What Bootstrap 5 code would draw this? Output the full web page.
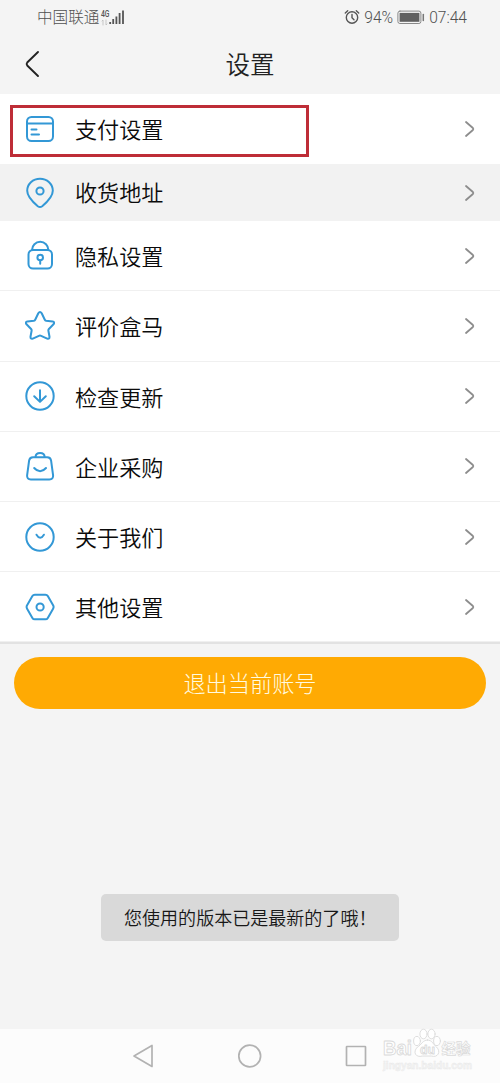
<!DOCTYPE html>
<html lang="zh-CN">
<head>
<meta charset="utf-8">
<meta name="viewport" content="width=device-width, initial-scale=1">
<title>设置</title>
<link href="https://cdn.jsdelivr.net/npm/bootstrap@5.3.0/dist/css/bootstrap.min.css" rel="stylesheet">
<style>
  body { background: #f4f4f4; color: #111; font-family: Roboto, "Noto Sans CJK SC", sans-serif; font-weight: 350; overflow: hidden; }
  svg { display: block; flex: none; fill: none; stroke-linecap: round; stroke-linejoin: round; }
  .screen { height: 1083px; }
  .status { height: 34px; padding: 1px 33px 0 37px; color: #505050; font-size: 15.6px; font-weight: 300; line-height: 33px; }
  .status span { padding-top: 1px; }
  .title-bar { height: 60px; padding: 0 24px; }
  .title-bar h1 { font-size: 24.5px; font-weight: 350; line-height: 36px; color: #222; padding: 4px 16px 0 0; }
  .settings { --bs-list-group-border-radius: 0; border-bottom: 2px solid #e2e2e2; }
  .settings .list-group-item { height: 70.2px; padding: 0 24px 0 25px; border: 0; border-bottom: 1px solid #f0f0f0; background: #fff; color: #0b0b0b; font-size: 22.1px; line-height: 32px; }
  .settings .list-group-item.pressed { height: 57px; background: #f2f2f2; border: 0; }
  .settings .list-group-item:first-child, .settings .list-group-item:last-child { border-bottom-color: transparent; }
  .settings span { padding-top: 3px; }
  .settings .pressed span { padding-top: 1px; }
  .icon { stroke: #3398d6; stroke-width: 2; margin-right: 20px; }
  .arrow { stroke: #8d8d8d; stroke-width: 1.8; }
  .highlight-box { left: 10px; top: 11px; width: 299px; height: 52px; border: 3px solid #be2d37; }
  .logout { height: 52px; margin: 13px 14px 0; padding: 2px 0 0; background: #ffaa03; border: 0; color: #fffbe0; font-size: 22.2px; font-weight: 300; }
  .logout:hover { background: #ffaa03; color: #fffbe0; }
  .notice { width: 298px; height: 47px; margin-top: 185px; padding: 2px 0 0 23px; border-radius: 5px; background: #d9d9d9; color: #171717; font-size: 18.05px; white-space: nowrap; }
  .system-nav { height: 54px; background: #fcfcfc; padding: 0 132px; }
  .system-nav svg { stroke: #b2b2b2; stroke-width: 1.7; }
  .watermark { right: 24px; bottom: 9px; }
  .watermark text { font-family: "Liberation Sans", "Noto Sans CJK SC", sans-serif; font-weight: 700; }
</style>
</head>
<body>
<div class="screen d-flex flex-column position-relative">
  <div class="status d-flex align-items-center justify-content-between">
    <div class="d-flex align-items-center">
      <span>中国联通</span>
      <svg width="27" height="18" viewBox="0 0 27 18">
        <text x="2" y="8" font-size="8.5" font-family="Roboto, sans-serif" font-weight="500" fill="#555" textLength="8.500" lengthAdjust="spacingAndGlyphs">4G</text>
        <path d="M4 16v-5l-1 1M7 11v5l1-1" stroke="#bbb" stroke-width=".8"/>
        <path d="M11.2 15v-2M14.2 15v-5M17.4 15V7.500M20.600 15V4M24 15V1.500" stroke="#555" stroke-width="1.8" stroke-linecap="butt"/>
      </svg>
    </div>
    <div class="d-flex align-items-center">
      <svg width="16" height="18" viewBox="0 0 16 18" stroke="#555" stroke-width="1.4"><circle cx="8" cy="8.500" r="5.700"/><path d="M8 5.500v3.200l2 2M1.300 4l2.400-2.200M14.700 4l-2.400-2.200"/></svg>
      <span class="ms-1">94%</span>
      <svg class="ms-1" width="28" height="18" viewBox="0 0 28 18"><rect x=".9" y="2.100" width="23" height="12.400" rx="2" stroke="#888"/><rect x="2.600" y="3.900" width="19.800" height="8.900" fill="#606060"/><path d="M26.300 5.500v6" stroke="#777" stroke-width="1.5"/></svg>
      <span class="ms-1">07:44</span>
    </div>
  </div>

  <header class="title-bar d-flex align-items-center">
    <svg width="16" height="28" viewBox="0 0 16 28" stroke="#222" stroke-width="1.900"><path d="M14 2 3.200 12.500q-1.200 1.500 0 3L14 26"/></svg>
    <h1 class="flex-fill text-center mb-0">设置</h1>
  </header>

  <div class="list-group list-group-flush settings position-relative">
    <a class="list-group-item d-flex align-items-center">
      <svg class="icon" width="30" height="32" viewBox="0 0 30 32"><rect x="2" y="4" width="26" height="24" rx="4.500"/><path d="M2 10.500h26M6.500 16.500h5M6.500 21.500h7.500"/></svg>
      <span class="flex-fill">支付设置</span>
      <svg class="arrow" width="12" height="18" viewBox="0 0 12 18"><path d="m2 2 6.900 6q.8 1 0 2L2 16"/></svg>
    </a>
    <a class="list-group-item pressed d-flex align-items-center">
      <svg class="icon" width="30" height="32" viewBox="0 0 30 32"><path d="M15 1.700C7.800 1.700 2.200 7 2.200 13.800c0 5.800 4.300 10.200 10.600 15.400q2.200 1.600 4.400 0C23.500 24 27.800 19.600 27.800 13.800 27.800 7 22.200 1.700 15 1.700Z"/><circle cx="15" cy="14" r="3.600"/></svg>
      <span class="flex-fill">收货地址</span>
      <svg class="arrow" width="12" height="18" viewBox="0 0 12 18"><path d="m2 2 6.900 6q.8 1 0 2L2 16"/></svg>
    </a>
    <a class="list-group-item d-flex align-items-center">
      <svg class="icon" width="30" height="32" viewBox="0 0 30 32"><rect x="3.500" y="10" width="23.500" height="18.500" rx="4.500"/><path d="M7 10a8.200 8.200 0 0 1 16.400 0M15.200 20.500v3.200"/><circle cx="15.200" cy="17.500" r="2.800"/></svg>
      <span class="flex-fill">隐私设置</span>
      <svg class="arrow" width="12" height="18" viewBox="0 0 12 18"><path d="m2 2 6.900 6q.8 1 0 2L2 16"/></svg>
    </a>
    <a class="list-group-item d-flex align-items-center">
      <svg class="icon" width="30" height="32" viewBox="0 0 30 32"><path d="M13.300 3.200q1.700-2.600 3.400 0l3.100 6.500q.4.800 1.300 1l6.500.7q2.600.7.900 2.900l-4.600 4.700q-.7.800-.5 1.800l1.100 5.900q.1 2.700-2.300 1.900l-6.100-2.800q-1.100-.5-2.200 0l-6.100 2.800q-2.400.8-2.300-1.900l1.100-5.900q.2-1-.5-1.800l-4.600-4.700q-1.700-2.200.9-2.900l6.500-.7q.9-.2 1.300-1Z"/></svg>
      <span class="flex-fill">评价盒马</span>
      <svg class="arrow" width="12" height="18" viewBox="0 0 12 18"><path d="m2 2 6.900 6q.8 1 0 2L2 16"/></svg>
    </a>
    <a class="list-group-item d-flex align-items-center">
      <svg class="icon" width="30" height="32" viewBox="0 0 30 32"><circle cx="15" cy="16" r="13.700"/><path d="M15 10.200v11.300M9.200 16.300l5.800 5.600 5.800-5.600"/></svg>
      <span class="flex-fill">检查更新</span>
      <svg class="arrow" width="12" height="18" viewBox="0 0 12 18"><path d="m2 2 6.900 6q.8 1 0 2L2 16"/></svg>
    </a>
    <a class="list-group-item d-flex align-items-center">
      <svg class="icon" width="30" height="32" viewBox="0 0 30 32"><path d="M8 7.200h14.200q3.400 0 3.900 3.400l2 14.700q.3 4.200-3.700 4.200H5.800q-4 0-3.700-4.200l2-14.700Q4.600 7.200 8 7.200ZM10.500 7q.2-4 4.600-4t4.600 4M9.200 18q5.900 6.600 11.800 0"/></svg>
      <span class="flex-fill">企业采购</span>
      <svg class="arrow" width="12" height="18" viewBox="0 0 12 18"><path d="m2 2 6.900 6q.8 1 0 2L2 16"/></svg>
    </a>
    <a class="list-group-item d-flex align-items-center">
      <svg class="icon" width="30" height="32" viewBox="0 0 30 32"><circle cx="15" cy="16" r="13.700"/><path d="M11.500 13.700q3.700 6.200 7.400 0"/></svg>
      <span class="flex-fill">关于我们</span>
      <svg class="arrow" width="12" height="18" viewBox="0 0 12 18"><path d="m2 2 6.900 6q.8 1 0 2L2 16"/></svg>
    </a>
    <a class="list-group-item d-flex align-items-center">
      <svg class="icon" width="30" height="32" viewBox="0 0 30 32"><path d="M9.800 3.700h10.600q1.600 0 2.400 1.400l5.300 9.200q1 1.700 0 3.400l-5.300 9.200q-.8 1.400-2.400 1.400H9.800q-1.600 0-2.400-1.400l-5.300-9.200q-1-1.700 0-3.400L7.400 5.100q.8-1.400 2.400-1.400Z"/><circle cx="15.100" cy="16" r="3.600"/></svg>
      <span class="flex-fill">其他设置</span>
      <svg class="arrow" width="12" height="18" viewBox="0 0 12 18"><path d="m2 2 6.900 6q.8 1 0 2L2 16"/></svg>
    </a>
    <div class="highlight-box position-absolute"></div>
  </div>

  <button type="button" class="btn rounded-pill logout">退出当前账号</button>

  <div class="notice d-flex align-items-center align-self-center">您使用的版本已是最新的了哦！</div>

  <nav class="system-nav d-flex align-items-center justify-content-between mt-auto">
    <svg width="22" height="26" viewBox="0 0 22 26"><path d="M20 2.500v21L2 13Z"/></svg>
    <svg width="26" height="26" viewBox="0 0 26 26"><circle cx="13.700" cy="13" r="10.900"/></svg>
    <svg width="24" height="26" viewBox="0 0 24 26"><rect x="2.500" y="3.500" width="19" height="19" rx=".5"/></svg>
  </nav>

  <svg class="watermark position-absolute" width="94" height="46" viewBox="0 0 94 46">
    <g stroke="#dadada" stroke-width=".9" fill="#fff">
      <text x="1" y="27" font-size="20" textLength="29" lengthAdjust="spacingAndGlyphs">Bai</text>
      <ellipse cx="35" cy="13" rx="3.400" ry="4.600"/><ellipse cx="41.500" cy="6" rx="3.600" ry="4.800"/><ellipse cx="49.500" cy="6" rx="3.600" ry="4.800"/><ellipse cx="55" cy="13" rx="3.400" ry="4.600"/>
      <path d="M45.500 12c5 0 6 5 9 7 5 5 1 11-5 9h-9c-7 2-10-4-5-9 4-2 5-7 10-7Z"/>
      <text x="38" y="26" font-size="13" textLength="15" lengthAdjust="spacingAndGlyphs">du</text>
      <text x="59.500" y="26" font-size="14.500" stroke-width=".7">经验</text>
    </g>
    <text x="1" y="41" font-size="10" textLength="89" lengthAdjust="spacingAndGlyphs" fill="#f5f5f5" stroke="#e8e8e8" stroke-width=".4">jingyan.baidu.com</text>
  </svg>
</div>
<script src="https://cdn.jsdelivr.net/npm/bootstrap@5.3.0/dist/js/bootstrap.bundle.min.js"></script>
</body>
</html>
